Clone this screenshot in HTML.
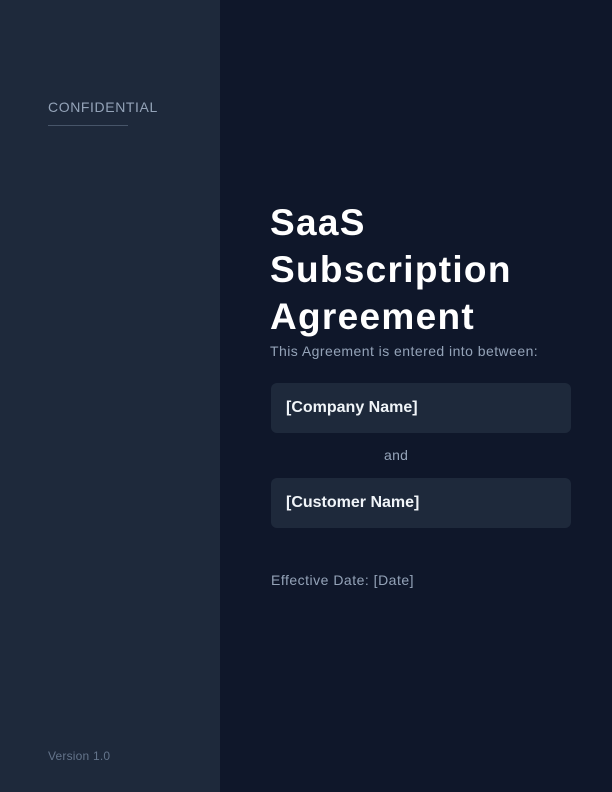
<!DOCTYPE html>
<html><head><style>
*{margin:0;padding:0;box-sizing:border-box}
body{width:612px;height:792px;background:#0f172a;font-family:"Liberation Sans",sans-serif;position:relative;overflow:hidden}
.side{position:absolute;left:0;top:0;width:220px;height:792px;background:#1e293b}
.conf{position:absolute;left:48px;top:99px;font-size:14px;color:#94a3b8;letter-spacing:0.6px}
.line{position:absolute;left:48px;top:125px;width:80px;height:1px;background:#475569}
.ver{position:absolute;left:48px;top:749px;font-size:12px;color:#64748b;letter-spacing:0.2px}
h1{position:absolute;left:270px;top:199px;font-size:37px;line-height:47px;color:#fff;font-weight:bold;letter-spacing:1.3px}
.sub{position:absolute;left:270px;top:343px;font-size:14px;color:#94a3b8;letter-spacing:0.45px}
.box{position:absolute;left:271px;width:300px;height:50px;background:#1e293b;border-radius:6px;color:#f1f5f9;font-size:16px;font-weight:bold;padding:15px 15px;line-height:20px}
.and{position:absolute;left:384px;top:447px;font-size:14px;color:#94a3b8;letter-spacing:0.3px}
.eff{position:absolute;left:271px;top:572px;font-size:14px;color:#94a3b8;letter-spacing:0.5px}
</style></head><body>
<div class="side"></div>
<div class="conf">CONFIDENTIAL</div>
<div class="line"></div>
<div class="ver">Version 1.0</div>
<h1>SaaS<br>Subscription<br>Agreement</h1>
<div class="sub">This Agreement is entered into between:</div>
<div class="box" style="top:383px">[Company Name]</div>
<div class="and">and</div>
<div class="box" style="top:478px">[Customer Name]</div>
<div class="eff">Effective Date: [Date]</div>
</body></html>
